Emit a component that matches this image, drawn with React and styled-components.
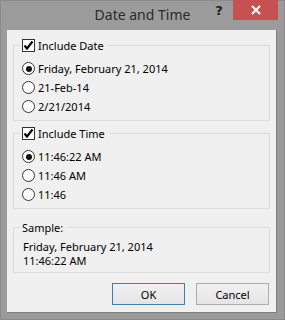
import styled, { createGlobalStyle } from "styled-components";

const GlobalStyle = createGlobalStyle`
  html, body {
    margin: 0;
    padding: 0;
    background: #ffffff;
  }
`;

const Window = styled.div`
  width: 285px;
  height: 320px;
  box-sizing: border-box;
  background-color: #9b9b9b;
  border: 1px solid #8a8a8a;
  display: flex;
  flex-direction: column;
  font-family: "Noto Sans", "Liberation Sans", sans-serif;
  font-size: 11px;
  color: #000;
`;

const TitleBar = styled.div`
  height: 29px;
  flex: none;
  display: flex;
  align-items: flex-start;
  position: relative;
`;

const Title = styled.div`
  flex: 1;
  text-align: center;
  font-size: 14px;
  line-height: 28px;
  color: #2b2b2b;
`;

const TitleButtons = styled.div`
  position: absolute;
  top: -1px;
  right: 6px;
  display: flex;
  align-items: flex-start;
`;

const HelpButton = styled.div`
  width: 28px;
  height: 20px;
  display: flex;
  align-items: center;
  justify-content: center;
  font-family: "DejaVu Sans", sans-serif;
  font-weight: bold;
  font-size: 13px;
  color: #222;
`;

const CloseButton = styled.div`
  width: 45px;
  height: 20px;
  background-color: #c75050;
  display: flex;
  align-items: center;
  justify-content: center;
`;

const Client = styled.div`
  flex: 1;
  margin: 0 7px 6px 6px;
  background-color: #f0f0f0;
  border-right: 1px solid #7f7f7f;
  border-bottom: 1px solid #7f7f7f;
  display: flex;
  flex-direction: column;
  padding: 8px 6px 0 6px;
`;

const Group = styled.fieldset`
  margin: 0 0 ${(p) => p.$gap || 0}px 0;
  padding: ${(p) => p.$pt ?? 6}px 6px ${(p) => p.$pb ?? 4}px 6px;
  border: 1px solid #dcdcdc;
  min-width: 0;
`;

const Legend = styled.legend`
  padding: 0 4px 0 2px;
  display: flex;
  align-items: center;
  gap: 3px;
  line-height: 15px;
`;

const Row = styled.label`
  height: 19px;
  display: flex;
  align-items: center;
  gap: 3px;
  padding-left: 2px;
`;

const Box = styled.span`
  width: 13px;
  height: 13px;
  box-sizing: border-box;
  border: 1px solid #333;
  background: #fff;
  display: flex;
  align-items: center;
  justify-content: center;
  flex: none;
`;

const Radio = styled.span`
  width: 13px;
  height: 13px;
  box-sizing: border-box;
  border: 1px solid #333;
  border-radius: 50%;
  background: #fff;
  display: flex;
  align-items: center;
  justify-content: center;
  flex: none;

  &::after {
    content: "";
    width: 6px;
    height: 6px;
    border-radius: 50%;
    background: ${(p) => (p.$checked ? "#111" : "transparent")};
  }
`;

const SampleText = styled.div`
  padding: 4px 0 2px 3px;
  line-height: 14px;
`;

const Footer = styled.div`
  display: flex;
  justify-content: flex-end;
  gap: 11px;
  padding: 10px 1px 0 0;
`;

const Button = styled.button`
  width: 73px;
  height: 22px;
  box-sizing: border-box;
  border: 1px solid ${(p) => (p.$default ? "#3c7fb1" : "#acacac")};
  background: linear-gradient(#f0f0f0, #e5e5e5);
  font-family: inherit;
  font-size: 11px;
  color: #000;
  padding: 0;
`;

function Check() {
  return (
    <Box>
      <svg width="11" height="11" viewBox="0 0 11 11">
        <path
          d="M1.5 5.5 L4 8.5 L9.5 1.5"
          fill="none"
          stroke="#000"
          strokeWidth="2.2"
        />
      </svg>
    </Box>
  );
}

function Option({ checked, children }) {
  return (
    <Row>
      <Radio $checked={checked} />
      {children}
    </Row>
  );
}

export default function App() {
  return (
    <>
      <GlobalStyle />
      <Window>
        <TitleBar>
          <Title>Date and Time</Title>
          <TitleButtons>
            <HelpButton>?</HelpButton>
            <CloseButton>
              <svg width="10" height="10" viewBox="0 0 10 10">
                <path d="M1 1 L9 9 M9 1 L1 9" stroke="#fff" strokeWidth="2" />
              </svg>
            </CloseButton>
          </TitleButtons>
        </TitleBar>
        <Client>
          <Group $gap={5} $pt={6} $pb={4}>
            <Legend>
              <Check />
              Include Date
            </Legend>
            <Option checked>Friday, February 21, 2014</Option>
            <Option>21-Feb-14</Option>
            <Option>2/21/2014</Option>
          </Group>
          <Group $gap={11} $pt={6} $pb={4}>
            <Legend>
              <Check />
              Include Time
            </Legend>
            <Option checked>11:46:22 AM</Option>
            <Option>11:46 AM</Option>
            <Option>11:46</Option>
          </Group>
          <Group $pt={1} $pb={2}>
            <Legend>Sample:</Legend>
            <SampleText>
              Friday, February 21, 2014
              <br />
              11:46:22 AM
            </SampleText>
          </Group>
          <Footer>
            <Button $default>OK</Button>
            <Button>Cancel</Button>
          </Footer>
        </Client>
      </Window>
    </>
  );
}
